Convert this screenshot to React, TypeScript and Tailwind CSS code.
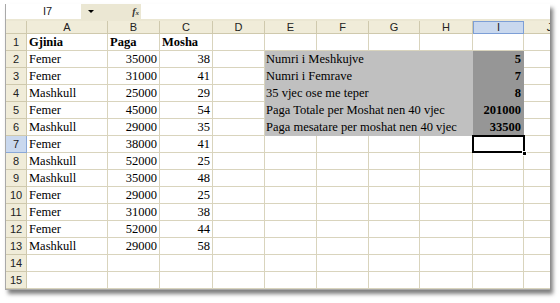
import React from "react";

const cols = ["A", "B", "C", "D", "E", "F", "G", "H", "I", "J"];
const widths = [81, 52, 53, 52, 52, 52, 51, 53, 51, 52];

const data: [string, string, string][] = [
  ["Femer", "35000", "38"],
  ["Femer", "31000", "41"],
  ["Mashkull", "25000", "29"],
  ["Femer", "45000", "54"],
  ["Mashkull", "29000", "35"],
  ["Femer", "38000", "41"],
  ["Mashkull", "52000", "25"],
  ["Mashkull", "35000", "48"],
  ["Femer", "29000", "25"],
  ["Femer", "31000", "38"],
  ["Femer", "52000", "44"],
  ["Mashkull", "29000", "58"],
];

const summary: [string, string][] = [
  ["Numri i Meshkujve", "5"],
  ["Numri i Femrave", "7"],
  ["35 vjec ose me teper", "8"],
  ["Paga Totale per Moshat nen 40 vjec", "201000"],
  ["Paga mesatare per moshat nen 40 vjec", "33500"],
];

const serif = { fontFamily: '"Liberation Serif", "Times New Roman", serif' };
const sans = { fontFamily: '"Liberation Sans", Arial, sans-serif' };

function Cell({
  w,
  children,
  align = "left",
  bold,
  fill,
}: {
  w: number;
  children?: React.ReactNode;
  align?: "left" | "right";
  bold?: boolean;
  fill?: "light" | "dark";
}) {
  const fillCls =
    fill === "light"
      ? "bg-[#c0c0c0] border-[#c0c0c0]"
      : fill === "dark"
      ? "bg-[#969696] border-[#969696]"
      : "bg-white border-[#d9d4bd]";
  return (
    <div
      style={{ width: w, ...serif }}
      className={`shrink-0 h-[17px] border-r border-b ${fillCls} flex items-end overflow-visible whitespace-nowrap leading-[15px] text-[12.5px] text-black ${
        align === "right" ? "justify-end pr-[2px]" : "pl-[2px]"
      } ${bold ? "font-bold" : ""}`}
    >
      {children}
    </div>
  );
}

function RowHeader({ n, active }: { n: number; active?: boolean }) {
  return (
    <div
      style={sans}
      className={`shrink-0 w-[21px] h-[17px] flex items-center justify-center text-[11px] text-[#222] border-r border-b ${
        active
          ? "bg-[#c9d8ee] border-[#8aa8d8]"
          : "bg-[#f0ecd9] border-[#cfc9ad]"
      }`}
    >
      {n}
    </div>
  );
}

function Row({ r }: { r: number }) {
  const cells: React.ReactNode[] = [];
  if (r === 1) {
    cells.push(
      <Cell key="a" w={widths[0]} bold>Gjinia</Cell>,
      <Cell key="b" w={widths[1]} bold>Paga</Cell>,
      <Cell key="c" w={widths[2]} bold>Mosha</Cell>
    );
  } else if (r <= 13) {
    const d = data[r - 2];
    cells.push(
      <Cell key="a" w={widths[0]}>{d[0]}</Cell>,
      <Cell key="b" w={widths[1]} align="right">{d[1]}</Cell>,
      <Cell key="c" w={widths[2]} align="right">{d[2]}</Cell>
    );
  } else {
    cells.push(
      <Cell key="a" w={widths[0]} />,
      <Cell key="b" w={widths[1]} />,
      <Cell key="c" w={widths[2]} />
    );
  }
  cells.push(<Cell key="d" w={widths[3]} />);
  if (r >= 2 && r <= 6) {
    const s = summary[r - 2];
    cells.push(
      <Cell key="eh" w={widths[4] + widths[5] + widths[6] + widths[7]} fill="light">
        <span className="-ml-[1px]">{s[0]}</span>
      </Cell>,
      <Cell key="i" w={widths[8]} fill="dark" align="right" bold>
        {s[1]}
      </Cell>
    );
  } else {
    cells.push(
      <Cell key="e" w={widths[4]} />,
      <Cell key="f" w={widths[5]} />,
      <Cell key="g" w={widths[6]} />,
      <Cell key="h" w={widths[7]} />
    );
    if (r === 7) {
      cells.push(
        <div key="i" className="relative shrink-0">
          <Cell w={widths[8]} />
          <div className="absolute -left-[1px] -top-[1px] w-[53px] h-[18px] border-2 border-black" />
          <div className="absolute -right-[3px] -bottom-[3px] w-[5px] h-[5px] bg-black border border-white" />
        </div>
      );
    } else {
      cells.push(<Cell key="i" w={widths[8]} />);
    }
  }
  cells.push(<Cell key="j" w={widths[9]} />);
  return (
    <div className="flex">
      <RowHeader n={r} active={r === 7} />
      {cells}
    </div>
  );
}

export default function App() {
  return (
    <div className="w-[560px] h-[303px] bg-white pt-[4px] pl-[5px]">
      <div className="w-[545px] h-[286px] overflow-hidden bg-white border-l border-b border-[#a9a9a9] shadow-[3px_4px_4px_rgba(0,0,0,0.5)]">
        {/* formula bar */}
        <div className="h-[17px] flex items-start bg-[#ebe7d3]" style={sans}>
          <div className="w-[75px] h-[15px] bg-white flex items-center justify-center pl-[8px] text-[11px] text-[#222]">
            I7
          </div>
          <div className="w-[20px] h-[15px] flex items-center justify-center">
            <div className="w-0 h-0 border-l-[3px] border-r-[3px] border-t-[3px] border-l-transparent border-r-transparent border-t-black" />
          </div>
          <div className="w-[40px] h-[15px] flex items-center justify-end pr-[2px]">
            <span className="italic font-bold text-[10px] text-[#333]" style={serif}>
              f<span className="text-[7px]">x</span>
            </span>
          </div>
          <div className="flex-1 h-[15px] bg-white" />
        </div>
        {/* column headers */}
        <div className="flex h-[13px]" style={sans}>
          <div className="shrink-0 w-[21px] h-[13px] bg-[#f0ecd9] border-r border-b border-[#cfc9ad]" />
          {cols.map((c, i) => (
            <div
              key={c}
              style={{ width: widths[i] }}
              className={`shrink-0 h-[13px] flex items-center justify-center text-[11px] leading-none text-[#222] border-r border-b ${
                c === "I"
                  ? "bg-[#c9d8ee] border border-[#7d9fd6]"
                  : "bg-[#f0ecd9] border-[#cfc9ad]"
              }`}
            >
              {c}
            </div>
          ))}
        </div>
        {Array.from({ length: 15 }, (_, i) => (
          <Row key={i} r={i + 1} />
        ))}
      </div>
    </div>
  );
}
